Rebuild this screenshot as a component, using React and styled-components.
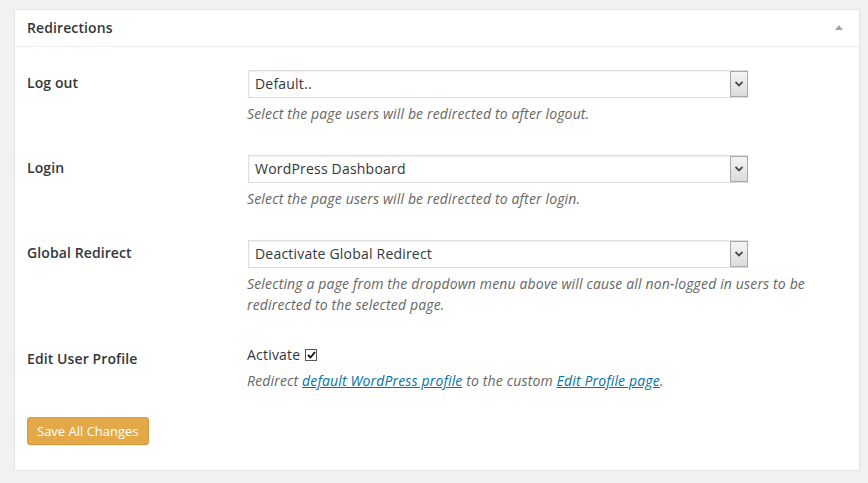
import React from 'react';
import styled, { createGlobalStyle } from 'styled-components';

const GlobalStyle = createGlobalStyle`
  html, body {
    margin: 0;
    padding: 0;
    background: #f1f1f1;
  }
  body {
    font-family: "Open Sans", "Noto Sans", sans-serif;
    color: #444;
    font-size: 13px;
  }
`;

const Page = styled.div`
  padding: 9px 8px 0 14px;
`;

const Postbox = styled.div`
  width: 844px;
  background: #fff;
  border: 1px solid #e5e5e5;
  box-shadow: 0 1px 1px rgba(0, 0, 0, 0.04);
`;

const Header = styled.div`
  display: flex;
  align-items: center;
  justify-content: space-between;
  padding: 8px 12px;
  border-bottom: 1px solid #eee;
`;

const Title = styled.h3`
  margin: 0;
  font-size: 14px;
  line-height: 1.4;
  font-weight: 600;
  letter-spacing: 0.1px;
  color: #32373c;
`;

const Toggle = styled.span`
  width: 0;
  height: 0;
  margin-right: 4px;
  border-left: 4px solid transparent;
  border-right: 4px solid transparent;
  border-bottom: 5px solid #a0a5aa;
`;

const Inside = styled.div`
  padding: 7px 12px 25px;
`;

const Row = styled.div`
  display: flex;
  align-items: flex-start;
`;

const Label = styled.div`
  width: 200px;
  padding: 20px 20px 0 0;
  font-size: 14px;
  line-height: 1.3;
  font-weight: 600;
  letter-spacing: 0.1px;
  color: #32373c;
`;

const Field = styled.div`
  flex: 1;
  padding: 15px 0;
`;

const SelectBox = styled.div`
  display: flex;
  align-items: stretch;
  width: 500px;
  height: 28px;
  margin: 1px 0 1px 1px;
  box-sizing: border-box;
  border: 1px solid #ddd;
  box-shadow: inset 0 1px 2px rgba(0, 0, 0, 0.07);
  background: #fff;
`;

const SelectValue = styled.span`
  flex: 1;
  padding-left: 6px;
  font-size: 14px;
  line-height: 26px;
  letter-spacing: 0.2px;
  color: #32373c;
`;

const ArrowButton = styled.span`
  width: 16px;
  display: flex;
  align-items: center;
  justify-content: center;
  border: 1px solid #a9a9a9;
  margin: 0 -1px 0 0;
  background: linear-gradient(#f4f4f4, #dcdcdc);
`;

const Description = styled.p`
  margin: 5px 0 0;
  font-size: 14px;
  line-height: 21px;
  font-style: italic;
  letter-spacing: 0.15px;
  color: #666;
  max-width: 570px;
`;

const CheckLabel = styled.label`
  display: flex;
  align-items: center;
  gap: 5px;
  font-size: 14px;
  line-height: 20px;
  letter-spacing: 0.2px;
  color: #32373c;
`;

const CheckBox = styled.span`
  width: 10px;
  height: 10px;
  border: 1px solid #555;
  background: #fff;
  display: flex;
  align-items: center;
  justify-content: center;
`;

const Link = styled.a`
  color: #0073aa;
  text-decoration: underline;
`;

const SaveButton = styled.button`
  margin-top: 11px;
  height: 28px;
  padding: 0 9px;
  font-family: inherit;
  font-size: 13px;
  color: #fff;
  background: #e3a948;
  border: 1px solid #d39b3e;
  border-radius: 3px;
  box-shadow: 0 1px 0 rgba(0, 0, 0, 0.08);
  cursor: pointer;
`;

function Chevron() {
  return (
    <svg width="8" height="6" viewBox="0 0 8 6">
      <path d="M0.5 1 L4 4.5 L7.5 1" fill="none" stroke="#4a4a4a" strokeWidth="1.8" />
    </svg>
  );
}

function Select({ value }) {
  return (
    <SelectBox>
      <SelectValue>{value}</SelectValue>
      <ArrowButton>
        <Chevron />
      </ArrowButton>
    </SelectBox>
  );
}

const rows = [
  {
    label: 'Log out',
    value: 'Default..',
    text: 'Select the page users will be redirected to after logout.',
  },
  {
    label: 'Login',
    value: 'WordPress Dashboard',
    text: 'Select the page users will be redirected to after login.',
  },
  {
    label: 'Global Redirect',
    value: 'Deactivate Global Redirect',
    text: 'Selecting a page from the dropdown menu above will cause all non-logged in users to be redirected to the selected page.',
  },
];

export default function App() {
  return (
    <>
      <GlobalStyle />
      <Page>
        <Postbox>
          <Header>
            <Title>Redirections</Title>
            <Toggle />
          </Header>
          <Inside>
            {rows.map((row) => (
              <Row key={row.label}>
                <Label>{row.label}</Label>
                <Field>
                  <Select value={row.value} />
                  <Description>{row.text}</Description>
                </Field>
              </Row>
            ))}
            <Row>
              <Label>Edit User Profile</Label>
              <Field>
                <CheckLabel>
                  Activate
                  <CheckBox>
                    <svg width="9" height="8" viewBox="0 0 9 8">
                      <path d="M1 4 L3.5 6.5 L8 1" fill="none" stroke="#111" strokeWidth="1.8" />
                    </svg>
                  </CheckBox>
                </CheckLabel>
                <Description>
                  Redirect <Link href="#">default WordPress profile</Link> to the custom{' '}
                  <Link href="#">Edit Profile page</Link>.
                </Description>
              </Field>
            </Row>
            <SaveButton>Save All Changes</SaveButton>
          </Inside>
        </Postbox>
      </Page>
    </>
  );
}
